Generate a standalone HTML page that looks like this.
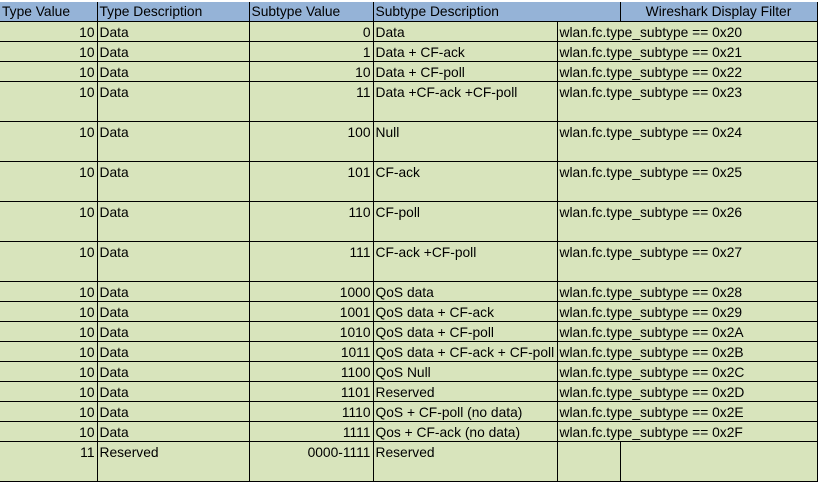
<!DOCTYPE html>
<html><head><meta charset="utf-8"><style>
body{margin:0;background:#fff;width:818px;height:484px;overflow:hidden;font-family:"Liberation Sans",sans-serif;font-size:13.8px;color:#000}
table{position:absolute;left:0;top:2px;border-collapse:collapse;table-layout:fixed}
td{padding:2px 2px 0 2px;height:17px;line-height:17px;vertical-align:top;white-space:nowrap;overflow:hidden;border:1px solid #000;background:#d8e4bc}
tr.h td{background:#95b3d7;border-top:none;border-left:none;border-right:1px solid #000;padding-top:1px;height:18px}
td.r{text-align:right}
tr.t td{height:37px}
td:first-child{border-left:none}
</style></head><body>
<table>
<colgroup><col style="width:97px"><col style="width:152px"><col style="width:124px"><col style="width:184px"><col style="width:63px"><col style="width:197px"></colgroup>
<tr class="h"><td>Type Value</td><td>Type Description</td><td>Subtype Value</td><td style="border-right:none">Subtype Description</td><td></td><td style="text-align:center">Wireshark Display Filter</td></tr>
<tr><td class="r">10</td><td>Data</td><td class="r">0</td><td>Data</td><td colspan="2">wlan.fc.type_subtype == 0x20</td></tr>
<tr><td class="r">10</td><td>Data</td><td class="r">1</td><td>Data + CF-ack</td><td colspan="2">wlan.fc.type_subtype == 0x21</td></tr>
<tr><td class="r">10</td><td>Data</td><td class="r">10</td><td>Data + CF-poll</td><td colspan="2">wlan.fc.type_subtype == 0x22</td></tr>
<tr class="t"><td class="r">10</td><td>Data</td><td class="r">11</td><td>Data +CF-ack +CF-poll</td><td colspan="2">wlan.fc.type_subtype == 0x23</td></tr>
<tr class="t"><td class="r">10</td><td>Data</td><td class="r">100</td><td>Null</td><td colspan="2">wlan.fc.type_subtype == 0x24</td></tr>
<tr class="t"><td class="r">10</td><td>Data</td><td class="r">101</td><td>CF-ack</td><td colspan="2">wlan.fc.type_subtype == 0x25</td></tr>
<tr class="t"><td class="r">10</td><td>Data</td><td class="r">110</td><td>CF-poll</td><td colspan="2">wlan.fc.type_subtype == 0x26</td></tr>
<tr class="t"><td class="r">10</td><td>Data</td><td class="r">111</td><td>CF-ack +CF-poll</td><td colspan="2">wlan.fc.type_subtype == 0x27</td></tr>
<tr><td class="r">10</td><td>Data</td><td class="r">1000</td><td>QoS data</td><td colspan="2">wlan.fc.type_subtype == 0x28</td></tr>
<tr><td class="r">10</td><td>Data</td><td class="r">1001</td><td>QoS data + CF-ack</td><td colspan="2">wlan.fc.type_subtype == 0x29</td></tr>
<tr><td class="r">10</td><td>Data</td><td class="r">1010</td><td>QoS data + CF-poll</td><td colspan="2">wlan.fc.type_subtype == 0x2A</td></tr>
<tr><td class="r">10</td><td>Data</td><td class="r">1011</td><td>QoS data + CF-ack + CF-poll</td><td colspan="2">wlan.fc.type_subtype == 0x2B</td></tr>
<tr><td class="r">10</td><td>Data</td><td class="r">1100</td><td>QoS Null</td><td colspan="2">wlan.fc.type_subtype == 0x2C</td></tr>
<tr><td class="r">10</td><td>Data</td><td class="r">1101</td><td>Reserved</td><td colspan="2">wlan.fc.type_subtype == 0x2D</td></tr>
<tr><td class="r">10</td><td>Data</td><td class="r">1110</td><td>QoS + CF-poll (no data)</td><td colspan="2">wlan.fc.type_subtype == 0x2E</td></tr>
<tr><td class="r">10</td><td>Data</td><td class="r">1111</td><td>Qos + CF-ack (no data)</td><td colspan="2">wlan.fc.type_subtype == 0x2F</td></tr>
<tr class="t"><td class="r">11</td><td>Reserved</td><td class="r">0000-1111</td><td>Reserved</td><td></td><td></td></tr>
</table>
</body></html>
